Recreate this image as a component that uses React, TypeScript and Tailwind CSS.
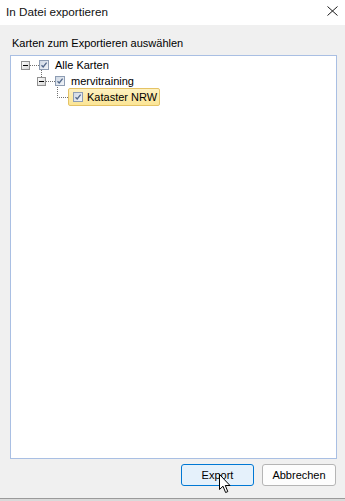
import React from "react";

const Expander = () => (
  <svg width="9" height="9" viewBox="0 0 9 9" className="shrink-0">
    <defs>
      <linearGradient id="exg" x1="0" y1="0" x2="1" y2="1">
        <stop offset="0" stopColor="#ffffff" />
        <stop offset="1" stopColor="#d4d4d4" />
      </linearGradient>
    </defs>
    <rect x="0.5" y="0.5" width="8" height="8" fill="url(#exg)" stroke="#919191" />
    <line x1="2" y1="4.5" x2="7" y2="4.5" stroke="#000" />
  </svg>
);

const Check = () => (
  <svg width="10" height="10" viewBox="0 0 10 10" className="shrink-0">
    <defs>
      <linearGradient id="ckg" x1="0" y1="0" x2="1" y2="1">
        <stop offset="0" stopColor="#cdd7e4" />
        <stop offset="1" stopColor="#f4f6f9" />
      </linearGradient>
    </defs>
    <rect x="0.5" y="0.5" width="9" height="9" fill="url(#ckg)" stroke="#8e9db3" />
    <path d="M2.5 5.2 L4.2 7 L7.6 2.6" fill="none" stroke="#52678a" strokeWidth="1.3" />
  </svg>
);

const HDots = ({ w }: { w: number }) => (
  <svg width={w} height="1" className="shrink-0 overflow-visible">
    <line x1="0" y1="0.5" x2={w} y2="0.5" stroke="#707070" strokeDasharray="1 1" />
  </svg>
);

const Cursor = () => (
  <svg width="13" height="20" viewBox="0 0 13 20" className="absolute left-[219px] top-[474px]">
    <path
      d="M0.5 0.5 L0.5 15.5 L4 12.2 L6.6 18.5 L8.8 17.6 L6.3 11.5 L11 11.5 Z"
      fill="#fff"
      stroke="#000"
      strokeLinejoin="round"
    />
  </svg>
);

export default function App() {
  return (
    <div
      className="relative w-[345px] h-[501px] bg-[#f0f0f0] overflow-hidden"
      style={{ fontFamily: '"Liberation Sans", Arial, sans-serif' }}
    >
      {/* title bar */}
      <div className="h-[25px] bg-white flex items-center justify-between pl-[6px] pr-[6px]">
        <span className="text-[11.7px] text-[#111] leading-none -mt-[2px]">In Datei exportieren</span>
        <svg width="11" height="10" viewBox="0 0 11 10" className="mr-[1px] -mt-[3px]">
          <path d="M0.5 0.5 L10.5 9.5 M10.5 0.5 L0.5 9.5" stroke="#1a1a1a" strokeWidth="1" />
        </svg>
      </div>

      <div className="pt-[11px] pl-[12px] h-[25px] text-[11px] leading-[14px] text-black">
        Karten zum Exportieren auswählen
      </div>

      {/* tree */}
      <div className="mt-[5px] ml-[10px] mr-[8px] h-[404px] bg-white border border-[#a9bfe3] pt-px text-[11px] text-black">
        <div className="h-4 flex items-center pl-[10px]">
          <Expander />
          <HDots w={9} />
          <Check />
          <span className="ml-[6px]">Alle Karten</span>
        </div>
        <div className="h-4 flex items-center pl-[26px] relative">
          <svg width="1" height="7" className="absolute left-[30px] top-[-3px]">
            <line x1="0.5" y1="0" x2="0.5" y2="7" stroke="#707070" strokeDasharray="1 1" />
          </svg>
          <Expander />
          <HDots w={9} />
          <Check />
          <span className="ml-[6px]">mervitraining</span>
        </div>
        <div className="h-4 flex items-center pl-[46px]">
          <svg width="11" height="13" viewBox="0 0 11 13" className="shrink-0 -mt-[12px]">
            <path d="M0.5 0 L0.5 12.5 L11 12.5" fill="none" stroke="#707070" strokeDasharray="1 1" />
          </svg>
          <div className="h-[18px] flex items-center pl-[4px] pr-[2px] bg-[linear-gradient(#fdf1c0,#fbe596)] border border-[#e5c365] rounded-[2px]">
            <Check />
            <span className="ml-[4px]">Kataster NRW</span>
          </div>
        </div>
      </div>

      {/* footer */}
      <div className="flex justify-end gap-[8px] pt-[5px] pr-[9px] h-[39px] text-[11px] text-black">
        <button className="w-[73px] h-[22px] rounded-[3px] border border-[#0078d4] bg-[#e5f1fb] flex items-center justify-center">
          Export
        </button>
        <button className="w-[74px] h-[22px] rounded-[3px] border border-[#b5b5b5] bg-[#fdfdfd] flex items-center justify-center">
          Abbrechen
        </button>
      </div>
      <div className="h-px bg-[#9a9a9a]" />
      <div className="h-[2px] bg-[#dadada]" />

      <Cursor />
    </div>
  );
}
